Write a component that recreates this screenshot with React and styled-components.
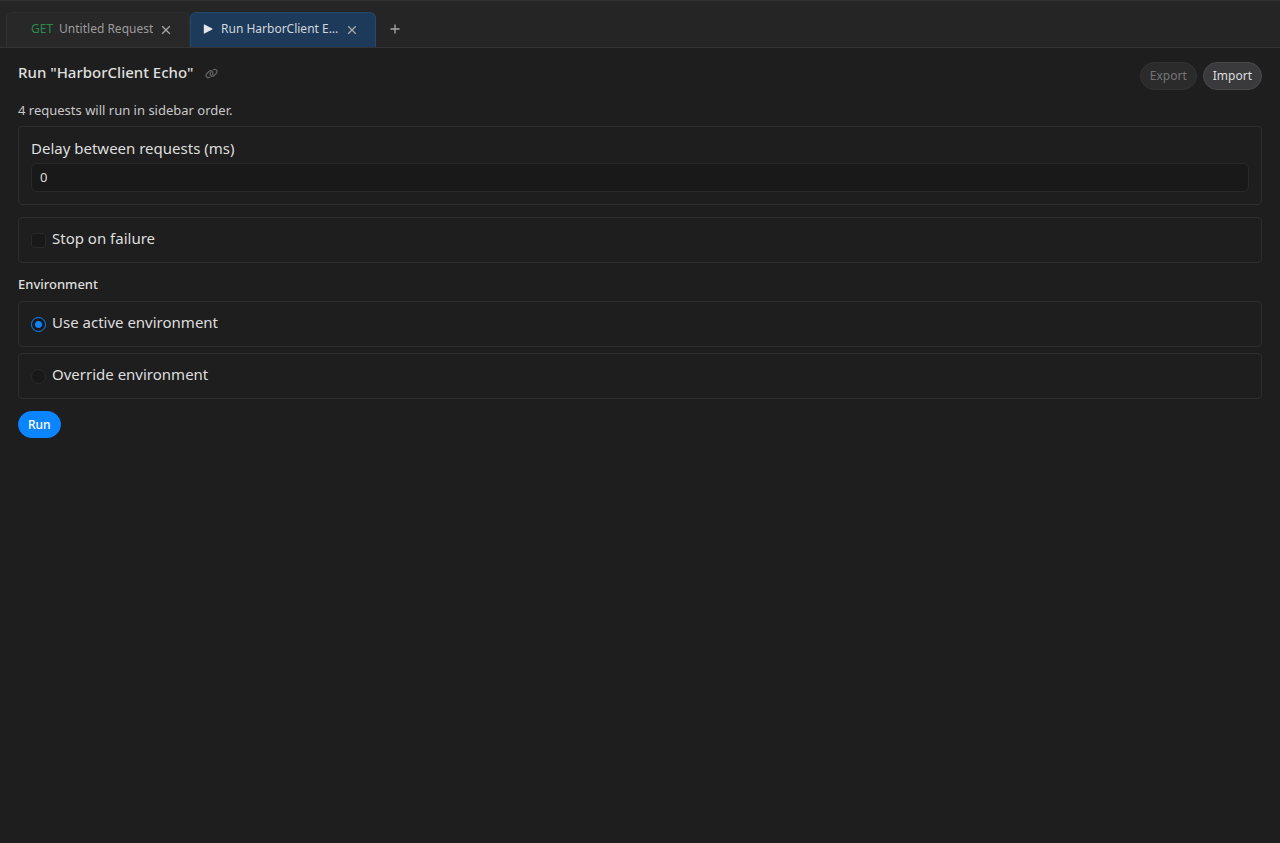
import React, { useState } from 'react';
import styled, { createGlobalStyle } from 'styled-components';

const GlobalStyle = createGlobalStyle`
  * {
    box-sizing: border-box;
  }

  body {
    margin: 0;
    background: #1e1e1e;
    color: #dedede;
    font-family: 'Noto Sans', 'Open Sans', sans-serif;
    font-size: 13px;
  }

  button, input {
    font: inherit;
    color: inherit;
  }
`;

// Tab bar
const TabBar = styled.nav`
  display: flex;
  align-items: flex-end;
  height: 48px;
  padding: 0 6px;
  background: #252525;
  border-top: 1px solid #303030;
  border-bottom: 1px solid #343434;
`;

const Tab = styled.div`
  display: flex;
  align-items: center;
  width: ${(props) => (props.$active ? '186px' : '184px')};
  height: 35px;
  padding: 0 18px 0 ${(props) => (props.$active ? '12px' : '24px')};
  border: 1px solid ${(props) => (props.$active ? '#25486d' : '#2e2e2e')};
  border-bottom: 0;
  border-radius: 6px 6px 0 0;
  background: ${(props) => (props.$active ? '#1e3a5a' : '#282828')};
  color: ${(props) => (props.$active ? '#cfd6dd' : '#9c9c9c')};
`;

const TabButton = styled.button`
  display: flex;
  align-items: center;
  gap: ${(props) => props.$gap || '8px'};
  flex: 1;
  min-width: 0;
  padding: 0 0 2px;
  border: 0;
  background: none;
  font-size: 12px;
  line-height: 16px;
  text-align: left;
  cursor: pointer;

  svg {
    flex-shrink: 0;
  }
`;

const Method = styled.span`
  color: #2c8a4b;
`;

const TabName = styled.span`
  overflow: hidden;
  text-overflow: ellipsis;
  white-space: nowrap;
`;

const IconButton = styled.button`
  display: flex;
  align-items: center;
  justify-content: center;
  flex-shrink: 0;
  padding: 0;
  border: 0;
  background: none;
  color: ${(props) => props.$color || '#a8a8a8'};
  cursor: pointer;
`;

const AddButton = styled(IconButton)`
  width: 37px;
  height: 36px;
`;

// Runner page
const Main = styled.main`
  display: flex;
  flex-direction: column;
  padding: 14px 18px;
`;

const Header = styled.header`
  display: flex;
  justify-content: space-between;
  height: 38px;
`;

const TitleRow = styled.div`
  display: flex;
  align-items: center;
  gap: 12px;
  height: 22px;
`;

const Title = styled.h1`
  margin: 0;
  padding-bottom: 2px;
  font-size: 15px;
  font-weight: 500;
  line-height: 20px;
`;

const Actions = styled.div`
  display: flex;
  gap: 6px;
`;

const Button = styled.button`
  height: 28px;
  padding: 0 9px;
  border: 1px solid #4a4a4c;
  border-radius: 14px;
  background: #3a3a3c;
  font-size: 12px;
  line-height: 16px;
  cursor: pointer;

  &:disabled {
    border-color: #323233;
    background: #2b2b2c;
    color: #747474;
    cursor: default;
  }
`;

const RunButton = styled(Button)`
  align-self: flex-start;
  height: 27px;
  margin-top: 12px;
  border-color: #0a84ff;
  background: #0a84ff;
  color: #fff;
  font-weight: 500;
`;

const Summary = styled.p`
  margin: 0 0 5px;
  color: #c8c8c8;
  line-height: 21px;
`;

const Card = styled.div`
  padding: 12px;
  border: 1px solid #2d2d2d;
  border-radius: 4px;
`;

const FieldLabel = styled.label`
  display: block;
  margin-bottom: 6px;
  font-size: 15px;
  line-height: 18px;
`;

const TextInput = styled.input`
  display: block;
  width: 100%;
  height: 29px;
  padding: 0 8px 2px;
  border: 1px solid #2a2a2a;
  border-radius: 6px;
  background: #191919;
  appearance: textfield;

  &::-webkit-inner-spin-button {
    appearance: none;
  }
`;

const OptionCard = styled.label`
  display: flex;
  align-items: center;
  gap: 6px;
  height: 46px;
  padding: 0 12px;
  border: 1px solid #2d2d2d;
  border-radius: 4px;
`;

const OptionText = styled.span`
  padding-bottom: 4px;
  font-size: 15px;
  line-height: 20px;
`;

const StopCard = styled(OptionCard)`
  margin-top: 12px;
`;

const Checkbox = styled.input`
  appearance: none;
  width: 15px;
  height: 15px;
  margin: 0;
  border: 1px solid #292929;
  border-radius: 3px;
  background: #191919;

  &:checked {
    border-color: #0a84ff;
    background: #0a84ff;
  }
`;

const Radio = styled(Checkbox)`
  border-radius: 50%;

  &:checked {
    background: radial-gradient(circle, #0a84ff 3px, #191919 4px);
  }
`;

const Environment = styled.fieldset`
  display: flex;
  flex-direction: column;
  gap: 6px;
  min-width: 0;
  margin: 11px 0 0;
  padding: 0;
  border: 0;
`;

const Legend = styled.legend`
  margin-bottom: 7px;
  padding: 0;
  font-weight: 500;
  line-height: 20px;
`;

const CloseIcon = () => (
  <svg width="10" height="10" viewBox="0 0 10 10" fill="none" stroke="currentColor" strokeWidth="1.3">
    <path d="M1.2 1.2 8.8 8.8M8.8 1.2 1.2 8.8" />
  </svg>
);

const PlusIcon = () => (
  <svg width="10" height="10" viewBox="0 0 10 10" fill="none" stroke="currentColor" strokeWidth="1.3">
    <path d="M5 .5v9M.5 5h9" />
  </svg>
);

const PlayIcon = () => (
  <svg width="10" height="10" viewBox="0 0 10 10" fill="#e4e8ec">
    <path d="M.8.8Q.8.2 1.5.5L9.2 4.6Q9.8 5 9.2 5.4L1.5 9.5Q.8 9.8.8 9.2Z" />
  </svg>
);

const LinkIcon = () => (
  <svg width="13" height="11" viewBox="0 0 640 512" fill="currentColor">
    <path d="M579.800 267.700c56.500-56.500 56.500-148 0-204.500-50-50-128.800-56.500-186.300-15.400l-1.600 1.100c-14.400 10.300-17.700 30.300-7.400 44.600s30.300 17.700 44.600 7.400l1.600-1.100c32.100-22.900 76-19.300 103.800 8.600 31.500 31.500 31.500 82.500 0 114L422.300 334.800c-31.500 31.500-82.500 31.500-114 0-27.900-27.900-31.500-71.800-8.600-103.800l1.100-1.600c10.300-14.400 6.900-34.400-7.400-44.600s-34.400-6.900-44.600 7.400l-1.100 1.600C206.500 251.200 213 330 263 380c56.500 56.500 148 56.500 204.500 0L579.800 267.700zM60.200 244.300c-56.500 56.500-56.500 148 0 204.500 50 50 128.800 56.500 186.300 15.400l1.600-1.100c14.400-10.300 17.700-30.300 7.400-44.600s-30.300-17.700-44.600-7.400l-1.600 1.100c-32.100 22.900-76 19.300-103.800-8.600C74 372 74 321 105.500 289.500L217.700 177.200c31.500-31.500 82.500-31.500 114 0 27.900 27.900 31.500 71.800 8.600 103.900l-1.100 1.600c-10.300 14.400-6.900 34.400 7.400 44.600s34.400 6.900 44.600-7.400l1.100-1.600C433.500 260.800 427 182 377 132c-56.500-56.500-148-56.500-204.500 0L60.200 244.300z" />
  </svg>
);

export default function App() {
  const [delay, setDelay] = useState('0');
  const [stopOnFailure, setStopOnFailure] = useState(false);
  const [environment, setEnvironment] = useState('active');

  return (
    <>
      <GlobalStyle />
      <TabBar>
        <Tab>
          <TabButton type="button" $gap="6px">
            <Method>GET</Method>
            <TabName>Untitled Request</TabName>
          </TabButton>
          <IconButton type="button" aria-label="Close Untitled Request">
            <CloseIcon />
          </IconButton>
        </Tab>
        <Tab $active>
          <TabButton type="button">
            <PlayIcon />
            <TabName>Run HarborClient E…</TabName>
          </TabButton>
          <IconButton type="button" aria-label="Close Run HarborClient Echo">
            <CloseIcon />
          </IconButton>
        </Tab>
        <AddButton type="button" aria-label="New tab">
          <PlusIcon />
        </AddButton>
      </TabBar>

      <Main>
        <Header>
          <TitleRow>
            <Title>Run "HarborClient Echo"</Title>
            <IconButton type="button" $color="#626262" aria-label="Copy link">
              <LinkIcon />
            </IconButton>
          </TitleRow>
          <Actions>
            <Button type="button" disabled>Export</Button>
            <Button type="button">Import</Button>
          </Actions>
        </Header>

        <Summary>4 requests will run in sidebar order.</Summary>

        <Card>
          <FieldLabel htmlFor="delay">Delay between requests (ms)</FieldLabel>
          <TextInput
            id="delay"
            type="number"
            min="0"
            value={delay}
            onChange={(e) => setDelay(e.target.value)}
          />
        </Card>

        <StopCard>
          <Checkbox
            type="checkbox"
            checked={stopOnFailure}
            onChange={(e) => setStopOnFailure(e.target.checked)}
          />
          <OptionText>Stop on failure</OptionText>
        </StopCard>

        <Environment>
          <Legend>Environment</Legend>
          <OptionCard>
            <Radio
              type="radio"
              name="environment"
              checked={environment === 'active'}
              onChange={() => setEnvironment('active')}
            />
            <OptionText>Use active environment</OptionText>
          </OptionCard>
          <OptionCard>
            <Radio
              type="radio"
              name="environment"
              checked={environment === 'override'}
              onChange={() => setEnvironment('override')}
            />
            <OptionText>Override environment</OptionText>
          </OptionCard>
        </Environment>

        <RunButton type="button">Run</RunButton>
      </Main>
    </>
  );
}
